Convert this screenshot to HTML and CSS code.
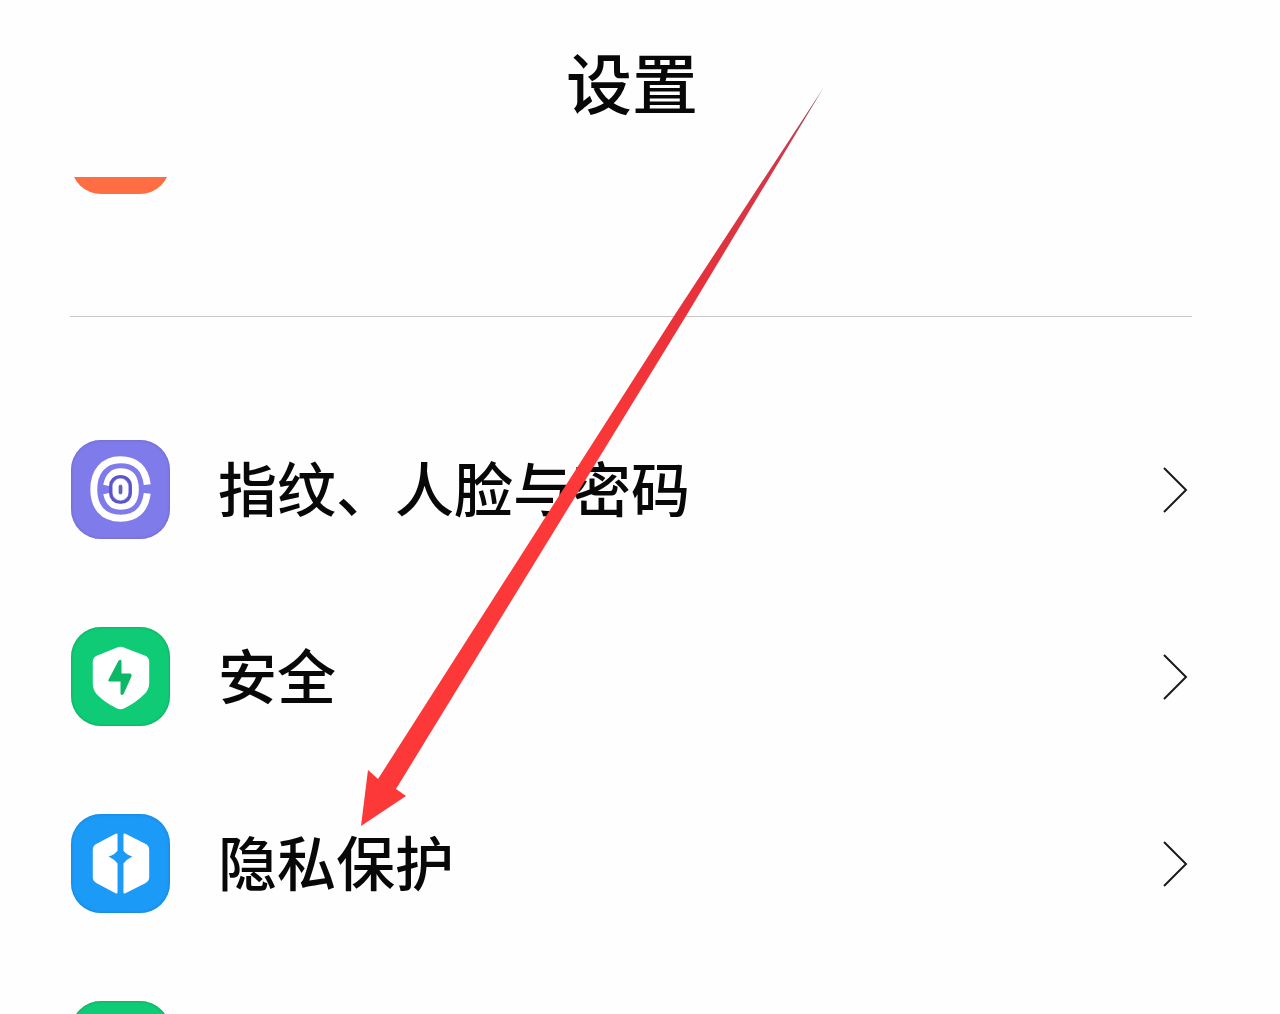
FILE: index.html
```html
<!DOCTYPE html>
<html lang="zh-CN">
<head>
  <meta charset="UTF-8">
  <meta name="viewport" content="width=device-width, initial-scale=1">
  <title>设置</title>
  <link rel="stylesheet" href="styles.css">
</head>
<body>
  <header class="header">
    <h1>设置</h1>
  </header>

  <main class="list">
    <div class="row">
      <span class="icon orange"></span>
    </div>
    <hr class="divider">

    <a class="row" href="#">
      <span class="icon purple">
        <svg viewBox="0 0 100 100" fill="none" stroke="#fff">
          <path d="M77 45 C75 28 65 20 50 20 C32 20 23 33 23 50 C23 67 32 79 50 79 C65 79 75 71 77 54" stroke-width="7"/>
          <path d="M36 46 C38 36 42 32 50 32 C60 32 65 38 65 50 C65 62 60 67 50 67 C42 67 38 63 36 54" stroke-width="7"/>
          <rect x="40" y="37" width="20" height="26" rx="9" stroke="#5b55c8" stroke-width="3"/>
          <rect x="45" y="42" width="10" height="16" rx="5" stroke-width="6"/>
          <path d="M50 46V54" stroke="#68659c" stroke-width="3"/>
        </svg>
      </span>
      <span class="label">指纹、人脸与密码</span>
      <svg class="chevron" viewBox="0 0 26 46"><path d="M2 1 24 23 2 45"/></svg>
    </a>

    <a class="row" href="#">
      <span class="icon green">
        <svg viewBox="0 0 100 100">
          <path d="M46 21 Q50 19 54 21 L75 29 Q79 31 79 35 V57 Q79 63 74 68 Q65 77 54 82 Q50 84 46 82 Q35 77 27 69 Q22 64 22 57 V35 Q22 31 26 29 Z" fill="#fff"/>
          <path d="M48 34 Q51 32 51 35 V47 H60 Q62 48 61 50 L53 68 Q50 70 50 67 V55 H39 Q37 55 38 53 Z" fill="#0bb865"/>
        </svg>
      </span>
      <span class="label">安全</span>
      <svg class="chevron" viewBox="0 0 26 46"><path d="M2 1 24 23 2 45"/></svg>
    </a>

    <a class="row" href="#">
      <span class="icon blue">
        <svg viewBox="0 0 100 100" fill="#fff">
          <path d="M47 21 Q47 19 45 20 L26 30 Q22 32 22 36 V64 Q22 68 26 70 L45 80 Q47 81 47 79 V50 Q44 46 38 43 Q44 41 47 37 Z"/>
          <path d="M53 21 Q53 19 55 20 L75 30 Q79 32 79 36 V64 Q79 68 75 70 L55 80 Q53 81 53 79 V50 Q56 46 62 43 Q56 41 53 37 Z"/>
        </svg>
      </span>
      <span class="label">隐私保护</span>
      <svg class="chevron" viewBox="0 0 26 46"><path d="M2 1 24 23 2 45"/></svg>
    </a>

    <div class="row">
      <span class="icon green"></span>
    </div>
  </main>

  <!-- arrow pointing at the privacy entry -->
  <svg class="arrow" viewBox="0 0 470 745">
    <defs>
      <linearGradient id="shaft" x1="0" y1="0" x2="0" y2="1">
        <stop offset="0%" stop-color="#8a6068"/>
        <stop offset="8%" stop-color="#d0384a"/>
        <stop offset="30%" stop-color="#e9313a"/>
        <stop offset="50%" stop-color="#fc3838"/>
      </linearGradient>
    </defs>
    <path d="M466 3 L316 232 L20 695 L10 686 L3 742 L48 712 L38 705 L328 232 Z" fill="url(#shaft)"/>
  </svg>
</body>
</html>
```

FILE: styles.css
```css
body {
  margin: 0;
  height: 100vh;
  display: flex;
  flex-direction: column;
  overflow: hidden;
  position: relative;
  background: #fefefe;
  color: #080808;
  font-family: "Noto Sans CJK SC", sans-serif;
}

.header {
  flex: none;
  padding: 32px 16px 49px 0;
  text-align: center;
}

.header h1 {
  margin: 0;
  font-size: 66px;
  font-weight: 500;
  line-height: 96px;
}

.list {
  flex: 1;
  min-height: 0;
  padding: 0 88px 0 70px;
  overflow: hidden;
}

/* the list is scrolled, so the first row sits half under the header */
.row:first-child {
  margin-top: -126px;
}

.row {
  display: flex;
  align-items: center;
  height: 187px;
  padding: 0 4px 0 1px;
  color: inherit;
  text-decoration: none;
}

.divider {
  height: 1px;
  margin: 78px 0 79px;
  border: none;
  background: #c8c8c8;
}

.icon {
  flex: none;
  width: 99px;
  height: 99px;
  border-radius: 30px;
}

.icon svg {
  display: block;
  width: 100%;
  height: 100%;
}

.orange {
  background: #ff6e42;
}

.purple {
  background: #7f7bea;
  box-shadow: inset 0 0 3px #6663b8;
}

.green {
  background: #10cb75;
  box-shadow: inset 0 0 3px #0a9a58;
}

.blue {
  background: #1b9af7;
  box-shadow: inset 0 0 3px #1478c8;
}

.label {
  flex: 1;
  margin-left: 48px;
  padding-bottom: 5px;
  font-size: 59px;
  font-weight: 500;
  line-height: 88px;
}

.chevron {
  flex: none;
  width: 26px;
  height: 46px;
  fill: none;
  stroke: #1a1a1a;
  stroke-width: 2;
}

.arrow {
  position: absolute;
  left: 358px;
  top: 84px;
  width: 470px;
  height: 745px;
  pointer-events: none;
}
```
